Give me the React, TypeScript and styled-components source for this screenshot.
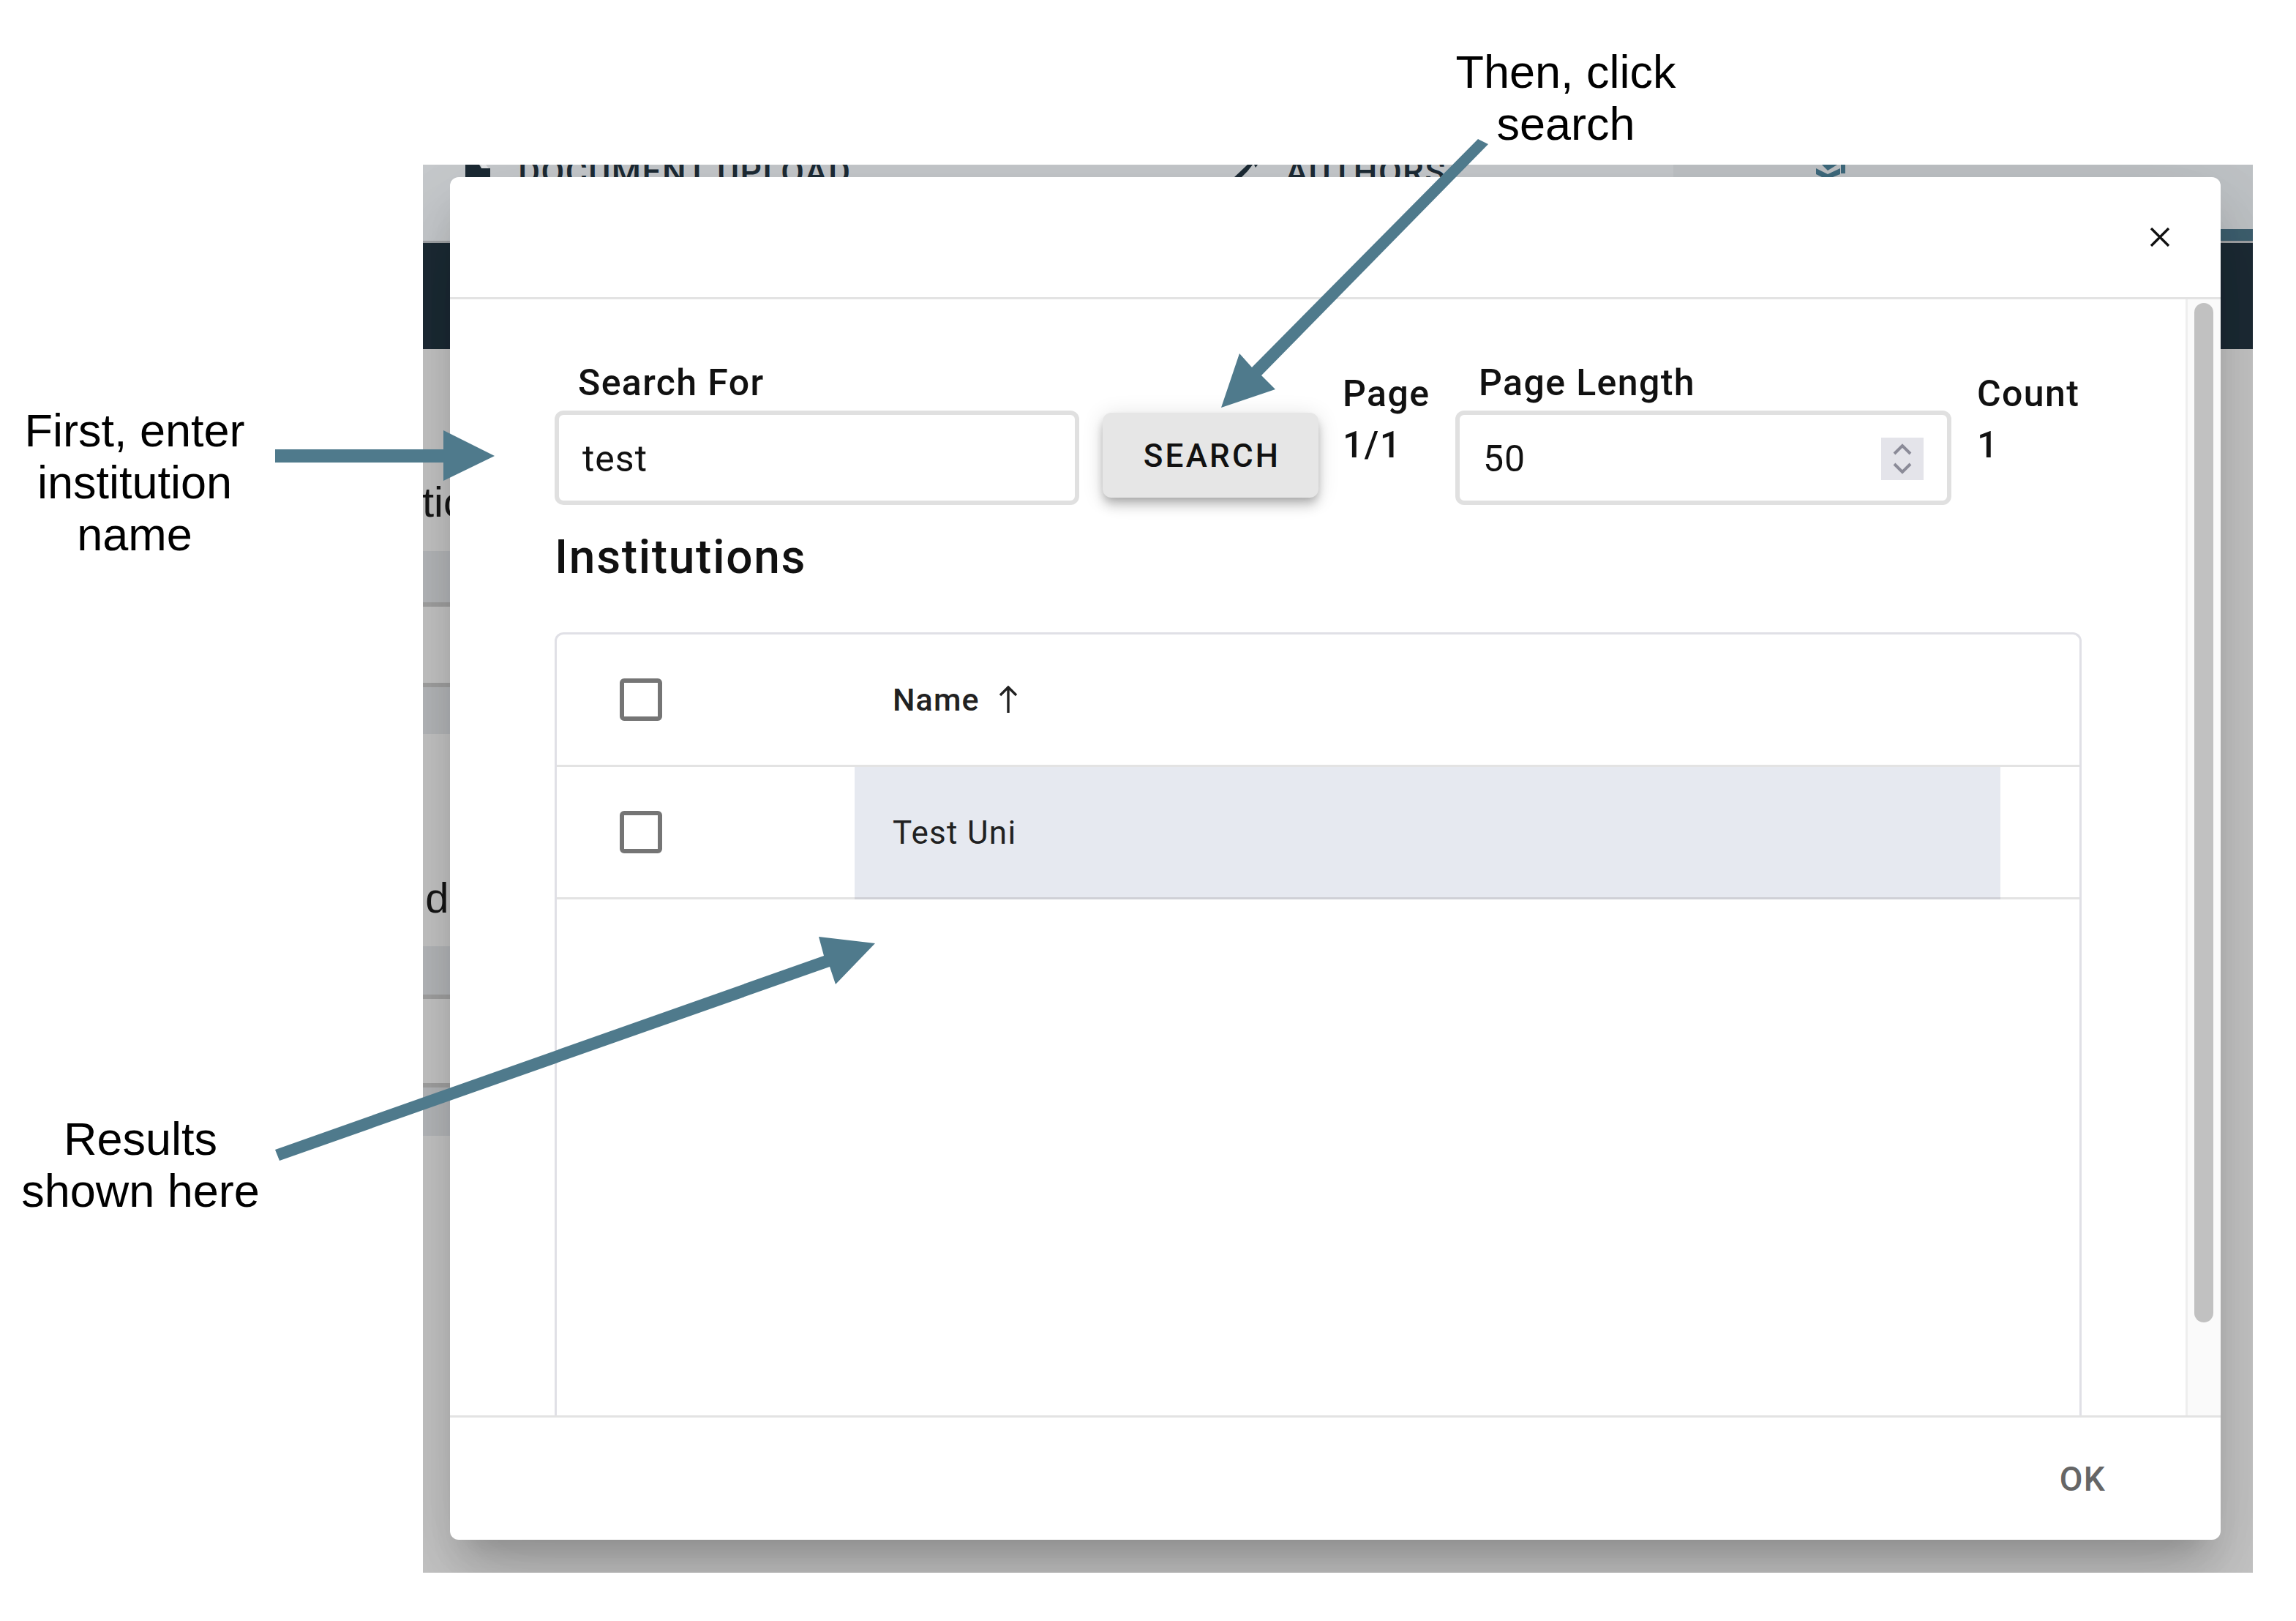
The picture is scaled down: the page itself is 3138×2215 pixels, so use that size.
import { createGlobalStyle } from "styled-components";
import styled from "styled-components";

const GlobalStyle = createGlobalStyle`
  html, body {
    margin: 0;
    padding: 0;
    background: #fff;
  }
  * {
    box-sizing: border-box;
  }
`;

const Stage = styled.div`
  position: relative;
  width: 3138px;
  height: 2215px;
  padding: 225px 59px 66px 578px;
  background: #fff;
  overflow: hidden;
  font-family: Roboto, "Liberation Sans", sans-serif;
`;

const Backdrop = styled.div`
  position: relative;
  width: 100%;
  height: 100%;
  overflow: hidden;
  background: #c8c8c8;
`;

const BackPage = styled.div`
  display: flex;
  flex-direction: column;
  width: 100%;
  height: 100%;
`;

const TabBar = styled.div`
  position: relative;
  flex: none;
  display: flex;
  height: 107px;
  overflow: hidden;
  background: #c8cbce;
  border-bottom: 3px solid #a3a5a8;
  color: #1c2b35;
  font-size: 46px;
  font-weight: 500;
  letter-spacing: 1.5px;
  white-space: nowrap;
`;

const BackTab = styled.div<{ $width: number; $indent: number; $selected?: boolean }>`
  flex: ${(props) => (props.$selected ? "1" : "none")};
  display: flex;
  align-items: flex-start;
  gap: 38px;
  width: ${(props) => props.$width}px;
  padding-left: ${(props) => props.$indent}px;
  margin-top: -14px;
  height: 130px;
  background: ${(props) => (props.$selected ? "#c0c4c7" : "transparent")};
  line-height: 48px;
`;

const TabIcon = styled.svg`
  flex: none;
  margin-top: 14px;
`;

const TabIndicator = styled.div`
  position: absolute;
  right: 0;
  bottom: -3px;
  width: 1000px;
  height: 19px;
  background: #3e6070;
`;

const DarkBand = styled.div`
  flex: none;
  height: 145px;
  background: #1c2b35;
`;

const BackText = styled.div<{ $top: number; $shift: number }>`
  margin-top: ${(props) => props.$top}px;
  margin-left: ${(props) => props.$shift}px;
  height: 56px;
  font-family: "Liberation Sans", Arial, sans-serif;
  font-size: 58px;
  line-height: 56px;
  color: #161616;
`;

const BackStrip = styled.div<{ $top: number; $height: number; $line: "top" | "bottom" }>`
  flex: none;
  width: 60px;
  margin-top: ${(props) => props.$top}px;
  height: ${(props) => props.$height}px;
  background: #b8babd;
  border-${(props) => props.$line}: 6px solid #a4a4a4;
`;

const Modal = styled.div`
  position: absolute;
  top: 17px;
  left: 37px;
  right: 44px;
  bottom: 45px;
  display: flex;
  flex-direction: column;
  background: #fff;
  border-radius: 12px;
  box-shadow: 0 33px 45px -21px rgba(0, 0, 0, 0.2),
    0 72px 114px 9px rgba(0, 0, 0, 0.1), 0 27px 138px 24px rgba(0, 0, 0, 0.08);
`;

const ModalHeader = styled.div`
  flex: none;
  display: flex;
  align-items: center;
  justify-content: flex-end;
  height: 167px;
  padding: 0 69px 1px 0;
  border-bottom: 3px solid #e3e3e3;
`;

const ModalBody = styled.div`
  flex: 1;
  min-height: 0;
  display: flex;
`;

const Content = styled.div`
  flex: 1;
  min-width: 0;
  display: flex;
  flex-direction: column;
  padding: 80px 142px 0 143px;
  overflow: hidden;
`;

const ScrollTrack = styled.div`
  flex: none;
  width: 48px;
  padding: 5px 10px 0 9px;
  background: #fafafa;
  border-left: 3px solid #eeeeee;
`;

const ScrollThumb = styled.div`
  height: 1393px;
  border-radius: 13px;
  background: #c1c1c1;
`;

const FormRow = styled.div`
  flex: none;
  display: flex;
  align-items: flex-start;
  color: #111;
`;

const Field = styled.div<{ $width: number }>`
  flex: none;
  display: flex;
  flex-direction: column;
  width: ${(props) => props.$width}px;
`;

const FieldLabel = styled.label`
  height: 72px;
  padding-left: 32px;
  font-size: 50px;
  font-weight: 500;
  line-height: 68px;
  letter-spacing: 1.4px;
  color: #111;
`;

const InputBox = styled.div`
  display: flex;
  align-items: center;
  height: 129px;
  padding: 2px 32px 0;
  background: #fff;
  border: 6px solid #e0e0e0;
  border-radius: 12px;
`;

const TextInput = styled.input`
  flex: 1;
  min-width: 0;
  padding: 0;
  border: none;
  outline: none;
  background: transparent;
  font-family: Roboto, "Liberation Sans", sans-serif;
  font-size: 50px;
  letter-spacing: 1px;
  color: #111;
`;

const Spinner = styled.div`
  flex: none;
  display: flex;
  align-items: center;
  justify-content: center;
  width: 58px;
  height: 58px;
  background: #e4e4ea;
`;

const SearchButton = styled.button`
  flex: none;
  width: 295px;
  height: 116px;
  margin: 75px 33px 0 32px;
  padding: 2px 0 0 4px;
  border: none;
  border-radius: 12px;
  background: #e6e6e6;
  font-family: Roboto, "Liberation Sans", sans-serif;
  font-size: 44px;
  font-weight: 500;
  letter-spacing: 3.2px;
  color: #111;
  box-shadow: 0 6px 12px -3px rgba(0, 0, 0, 0.2), 0 12px 15px 0 rgba(0, 0, 0, 0.14),
    0 3px 30px 0 rgba(0, 0, 0, 0.12);
`;

const StatBlock = styled.div<{ $width: number; $left?: number }>`
  flex: none;
  width: ${(props) => props.$width}px;
  margin-top: 14px;
  margin-left: ${(props) => props.$left ?? 0}px;
  font-size: 50px;
  font-weight: 500;
  line-height: 70px;
  letter-spacing: 1.4px;
`;

const SectionTitle = styled.h6`
  flex: none;
  margin: 36px 0 66px;
  font-size: 64px;
  font-weight: 500;
  line-height: 72px;
  letter-spacing: 1.7px;
  color: #111;
`;

const TableFrame = styled.div`
  flex: 1;
  min-height: 0;
  border: 3px solid #e0e0e6;
  border-bottom: none;
  border-radius: 12px 12px 0 0;
`;

const TableRow = styled.div`
  display: grid;
  grid-template-columns: 407px 1fr 108px;
  height: 181px;
  border-bottom: 3px solid #e3e3e3;
`;

const CheckCell = styled.div`
  display: flex;
  align-items: center;
  padding-left: 86px;
`;

const CheckBox = styled.span`
  display: block;
  width: 58px;
  height: 58px;
  border: 6px solid #757575;
  border-radius: 6px;
`;

const NameCell = styled.div<{ $active?: boolean }>`
  display: flex;
  align-items: center;
  gap: 25px;
  padding: ${(props) => (props.$active ? "2px" : "0")} 0 0 52px;
  background: ${(props) => (props.$active ? "#e6e9f0" : "transparent")};
  box-shadow: ${(props) => (props.$active ? "0 3px 0 #cfd0d6" : "none")};
  font-size: ${(props) => (props.$active ? 44 : 43)}px;
  font-weight: ${(props) => (props.$active ? 400 : 500)};
  letter-spacing: ${(props) => (props.$active ? 1.3 : 1.1)}px;
  color: #212121;
`;

const ModalFooter = styled.div`
  flex: none;
  display: flex;
  align-items: center;
  justify-content: flex-end;
  height: 170px;
  padding-right: 157px;
  border-top: 3px solid #e3e3e3;
`;

const FooterButton = styled.span`
  font-size: 46px;
  font-weight: 500;
  letter-spacing: 1.3px;
  color: #666;
`;

const ArrowLayer = styled.svg`
  position: absolute;
  top: 0;
  left: 0;
  pointer-events: none;
`;

const Note = styled.div<{ $x: number; $y: number }>`
  position: absolute;
  left: ${(props) => props.$x}px;
  top: ${(props) => props.$y}px;
  transform: translateX(-50%);
  font-family: "Liberation Sans", Arial, sans-serif;
  font-size: 63px;
  line-height: 71px;
  text-align: center;
  white-space: nowrap;
  color: #000;
`;

const ARROW = "#4f7a8c";

const App = () => {
  return (
    <>
      <GlobalStyle />
      <Stage>
        <Backdrop>
          <BackPage>
            <TabBar>
              <BackTab $width={1050} $indent={58}>
                <TabIcon width="34" height="17" viewBox="0 0 34 17">
                  <path d="M0 0h19l3 5h12v12H0z" fill="#1c2b35" />
                  <path d="M22 0h6l4 5H22z" fill="#e2e4e6" />
                </TabIcon>
                <span>DOCUMENT UPLOAD</span>
              </BackTab>
              <BackTab $width={659} $indent={59}>
                <TabIcon width="32" height="17" viewBox="0 0 32 17">
                  <path d="M0 17L18 0h7l-7 9-8 8z" fill="#1c2b35" />
                  <path d="M27 0h5l-3 4z" fill="#1c2b35" />
                </TabIcon>
                <span>AUTHORS</span>
              </BackTab>
              <BackTab $width={0} $indent={195} $selected>
                <TabIcon width="40" height="17" viewBox="0 0 40 17">
                  <path d="M8 0h21l-13 8z" fill="#3e6a7d" />
                  <path d="M0 5l16 8 17-8v8l-10 4H8l-8-4z" fill="#3e6a7d" />
                  <path d="M34 0h6v12h-6z" fill="#3e6a7d" />
                </TabIcon>
              </BackTab>
              <TabIndicator />
            </TabBar>
            <DarkBand />
            <BackText $top={181} $shift={-1}>tic</BackText>
            <BackStrip $top={39} $height={76} $line="bottom" />
            <BackStrip $top={104} $height={70} $line="top" />
            <BackText $top={196} $shift={-29}>nde</BackText>
            <BackStrip $top={38} $height={72} $line="bottom" />
            <BackStrip $top={115} $height={72} $line="top" />
          </BackPage>
          <Modal>
            <ModalHeader>
              <svg width="28" height="26" viewBox="0 0 28 26">
                <path d="M2 1l24 24M26 1L2 25" stroke="#111" strokeWidth="3.4" fill="none" />
              </svg>
            </ModalHeader>
            <ModalBody>
              <Content>
                <FormRow>
                  <Field $width={717}>
                    <FieldLabel>Search For</FieldLabel>
                    <InputBox>
                      <TextInput readOnly value="test" />
                    </InputBox>
                  </Field>
                  <SearchButton>SEARCH</SearchButton>
                  <StatBlock $width={154}>
                    <div>Page</div>
                    <div>1/1</div>
                  </StatBlock>
                  <Field $width={678}>
                    <FieldLabel>Page Length</FieldLabel>
                    <InputBox>
                      <TextInput readOnly value="50" />
                      <Spinner>
                        <svg width="26" height="42" viewBox="0 0 26 42">
                          <path
                            d="M2 14L13 3l11 11M2 28l11 11 11-11"
                            stroke="#8b8b98"
                            strokeWidth="4"
                            fill="none"
                          />
                        </svg>
                      </Spinner>
                    </InputBox>
                  </Field>
                  <StatBlock $width={140} $left={35}>
                    <div>Count</div>
                    <div>1</div>
                  </StatBlock>
                </FormRow>
                <SectionTitle>Institutions</SectionTitle>
                <TableFrame>
                  <TableRow>
                    <CheckCell>
                      <CheckBox />
                    </CheckCell>
                    <NameCell>
                      <span>Name</span>
                      <svg width="28" height="38" viewBox="0 0 28 38">
                        <path d="M14 37V2M3 13L14 2l11 11" stroke="#212121" strokeWidth="3.4" fill="none" />
                      </svg>
                    </NameCell>
                    <div />
                  </TableRow>
                  <TableRow>
                    <CheckCell>
                      <CheckBox />
                    </CheckCell>
                    <NameCell $active>Test Uni</NameCell>
                    <div />
                  </TableRow>
                </TableFrame>
              </Content>
              <ScrollTrack>
                <ScrollThumb />
              </ScrollTrack>
            </ModalBody>
            <ModalFooter>
              <FooterButton>OK</FooterButton>
            </ModalFooter>
          </Modal>
        </Backdrop>

        <ArrowLayer width="3138" height="2215" viewBox="0 0 3138 2215">
          <path d="M376 614H606V588L676 623 606 657V632H376Z" fill={ARROW} />
          <path d="M2034 197L1724 513 1743 532 1669 557 1694 483 1711 502 2020 190Z" fill={ARROW} />
          <path d="M376 1571L1126 1306 1119 1280 1196 1289 1142 1345 1134 1321 382 1586Z" fill={ARROW} />
        </ArrowLayer>

        <Note $x={2140} $y={63}>
          Then, click
          <br />
          search
        </Note>
        <Note $x={184} $y={553}>
          First, enter
          <br />
          institution
          <br />
          name
        </Note>
        <Note $x={192} $y={1521}>
          Results
          <br />
          shown here
        </Note>
      </Stage>
    </>
  );
};

export default App;
